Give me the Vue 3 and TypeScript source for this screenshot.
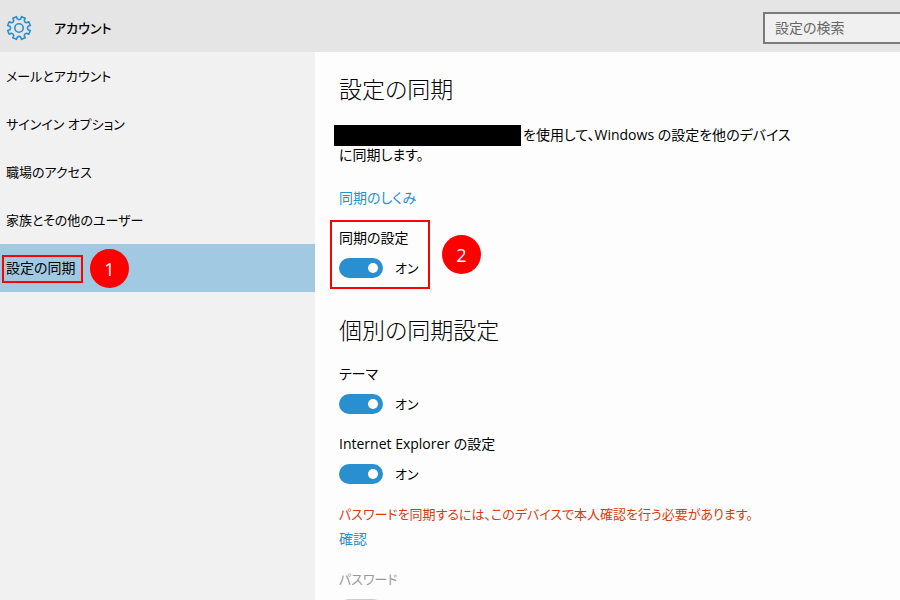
<script setup lang="ts">
import { ref } from 'vue'

interface NavItem {
  id: string
  label: string
}

interface SyncOption {
  id: string
  label: string
  on: boolean
}

const navItems: NavItem[] = [
  { id: 'mail', label: 'メールとアカウント' },
  { id: 'signin', label: 'サインイン オプション' },
  { id: 'work', label: '職場のアクセス' },
  { id: 'family', label: '家族とその他のユーザー' },
  { id: 'sync', label: '設定の同期' },
]

const activeId = ref('sync')
const query = ref('')
const syncOn = ref(true)
const passwordOn = ref(false)
const options = ref<SyncOption[]>([
  { id: 'theme', label: 'テーマ', on: true },
  { id: 'ie', label: 'Internet Explorer の設定', on: true },
])

// Eight-tooth gear outline centred on the origin, with a valley at the top.
function gearPath(): string {
  const point = (radius: number, degrees: number): string => {
    const a = (degrees * Math.PI) / 180
    return `${(radius * Math.cos(a)).toFixed(2)} ${(radius * Math.sin(a)).toFixed(2)}`
  }
  let d = ''
  for (let i = 0; i < 8; i++) {
    const c = i * 45 + 22.5
    d += `${i === 0 ? 'M' : 'L'}${point(9.2, c - 12)}`
    d += `L${point(11.6, c - 10)}L${point(11.6, c + 10)}L${point(9.2, c + 12)}`
    d += `Q${point(7.8, c + 22.5)} ${point(9.2, c + 33)}`
  }
  return d + 'Z'
}

const gear = gearPath()
</script>

<template>
  <div class="window">
    <header class="header">
      <svg class="gear" viewBox="-13 -13 26 26" aria-hidden="true">
        <path :d="gear" />
        <circle r="4.2" />
      </svg>
      <h1 class="title">アカウント</h1>
      <input v-model="query" class="search" type="search" placeholder="設定の検索" aria-label="設定の検索" />
    </header>

    <div class="body">
      <nav class="sidebar">
        <a
          v-for="item in navItems"
          :key="item.id"
          href="#"
          class="nav-item"
          :class="{ active: item.id === activeId }"
          @click.prevent="activeId = item.id"
        >
          <span class="nav-label">
            {{ item.label }}
            <template v-if="item.id === 'sync'">
              <span class="frame frame-nav"></span>
              <span class="badge badge-nav">1</span>
            </template>
          </span>
        </a>
      </nav>

      <main class="content">
        <h2 class="heading">設定の同期</h2>
        <p class="text intro"><span class="redacted"></span>を使用して、Windows の設定を他のデバイス<br />に同期します。</p>
        <a href="#" class="link how">同期のしくみ</a>

        <div class="option main-option">
          <label for="sync-all">同期の設定</label>
          <div class="switch-row">
            <input id="sync-all" v-model="syncOn" class="switch" type="checkbox" />
            <span>{{ syncOn ? 'オン' : 'オフ' }}</span>
          </div>
          <span class="frame frame-option"></span>
          <span class="badge badge-option">2</span>
        </div>

        <h2 class="heading second">個別の同期設定</h2>
        <div v-for="option in options" :key="option.id" class="option">
          <label :for="option.id">{{ option.label }}</label>
          <div class="switch-row">
            <input :id="option.id" v-model="option.on" class="switch" type="checkbox" />
            <span>{{ option.on ? 'オン' : 'オフ' }}</span>
          </div>
        </div>

        <p class="text warning">パスワードを同期するには、このデバイスで本人確認を行う必要があります。</p>
        <a href="#" class="link">確認</a>

        <div class="option disabled">
          <label for="password">パスワード</label>
          <div class="switch-row">
            <input id="password" v-model="passwordOn" class="switch" type="checkbox" disabled />
          </div>
        </div>
      </main>
    </div>
  </div>
</template>

<style>
body {
  margin: 0;
}
</style>

<style scoped>
.window {
  display: flex;
  flex-direction: column;
  height: 100vh;
  overflow: hidden;
  background: #fdfdfd;
  color: #000;
  font-family: 'Open Sans', 'Noto Sans CJK JP', sans-serif;
  font-size: 14px;
  line-height: 20px;
  font-feature-settings: 'palt';
}

.header {
  display: flex;
  flex: none;
  align-items: center;
  box-sizing: border-box;
  height: 52px;
  padding: 4px 0 0 6px;
  background: #e5e5e5;
}

.gear {
  width: 26px;
  height: 26px;
  fill: none;
  stroke: #2a8fcf;
  stroke-width: 1.6;
  stroke-linejoin: round;
}

.title {
  flex: 1;
  margin: 0 0 0 22px;
  font-size: 13px;
  font-weight: 500;
}

.search {
  box-sizing: border-box;
  width: 140px;
  height: 32px;
  margin-right: -3px;
  padding: 0 10px 2px;
  border: 2px solid #7a7a7a;
  border-radius: 0;
  outline: none;
  appearance: none;
  background: #f0f0f0;
  color: #000;
  font: inherit;
  font-feature-settings: inherit;
}

.search::placeholder {
  color: #666;
  opacity: 1;
}

.body {
  display: flex;
  flex: 1;
  min-height: 0;
}

.sidebar {
  flex: 0 0 35%;
  background: #f1f1f1;
}

.nav-item {
  display: flex;
  align-items: center;
  height: 48px;
  padding-left: 6px;
  color: #000;
  font-size: 13px;
  text-decoration: none;
}

.nav-item.active {
  background: #a1c9e2;
  font-size: 14px;
}

.nav-label {
  position: relative;
}

.content {
  flex: 1;
  min-width: 0;
  padding: 21px 24px 0;
  overflow-y: auto;
  scrollbar-width: none;
}

.heading {
  margin: 0;
  font-size: 23px;
  font-weight: 300;
  line-height: 32px;
}

.second {
  margin: 36px 0 18px;
}

.text {
  margin: 0;
}

.intro {
  margin-top: 20px;
}

.redacted {
  display: inline-block;
  width: 187px;
  height: 21px;
  margin: 0 2px -1px -5px;
  background: #000;
  vertical-align: top;
}

.link {
  display: block;
  width: fit-content;
  color: #2a8fcf;
  text-decoration: none;
}

.how {
  margin-top: 23px;
}

.option label {
  display: block;
  width: fit-content;
}

.option + .option {
  margin-top: 20px;
}

.main-option {
  position: relative;
  margin-top: 20px;
}

.switch-row {
  display: flex;
  align-items: center;
  gap: 12px;
  margin-top: 10px;
  font-size: 13px;
}

.switch {
  display: flex;
  align-items: center;
  justify-content: flex-start;
  box-sizing: border-box;
  width: 44px;
  height: 20px;
  margin: 0;
  padding: 0 5px;
  border-radius: 10px;
  appearance: none;
  background: #ccc;
}

.switch::before {
  width: 10px;
  height: 10px;
  border-radius: 50%;
  background: #fff;
  content: '';
}

.switch:checked {
  justify-content: flex-end;
  background: #2a8fcf;
}

.warning {
  margin-top: 20px;
  color: #dc3a0c;
  font-size: 13px;
}

.warning + .link {
  margin-top: 5px;
}

.disabled {
  margin-top: 20px;
  color: #999;
  font-size: 13px;
}

.frame {
  position: absolute;
  box-sizing: border-box;
  border: 2px solid #f00;
  pointer-events: none;
}

.frame-nav {
  inset: -3px -7px -5px -4px;
}

.frame-option {
  top: -8px;
  left: -9px;
  width: 100px;
  height: 69px;
}

.badge {
  position: absolute;
  display: flex;
  align-items: center;
  justify-content: center;
  width: 39px;
  height: 39px;
  border-radius: 50%;
  background: #f00;
  color: #fff;
  font-size: 18px;
}

.badge-nav {
  top: -9px;
  left: 84px;
}

.badge-option {
  top: 7px;
  left: 103px;
}
</style>
